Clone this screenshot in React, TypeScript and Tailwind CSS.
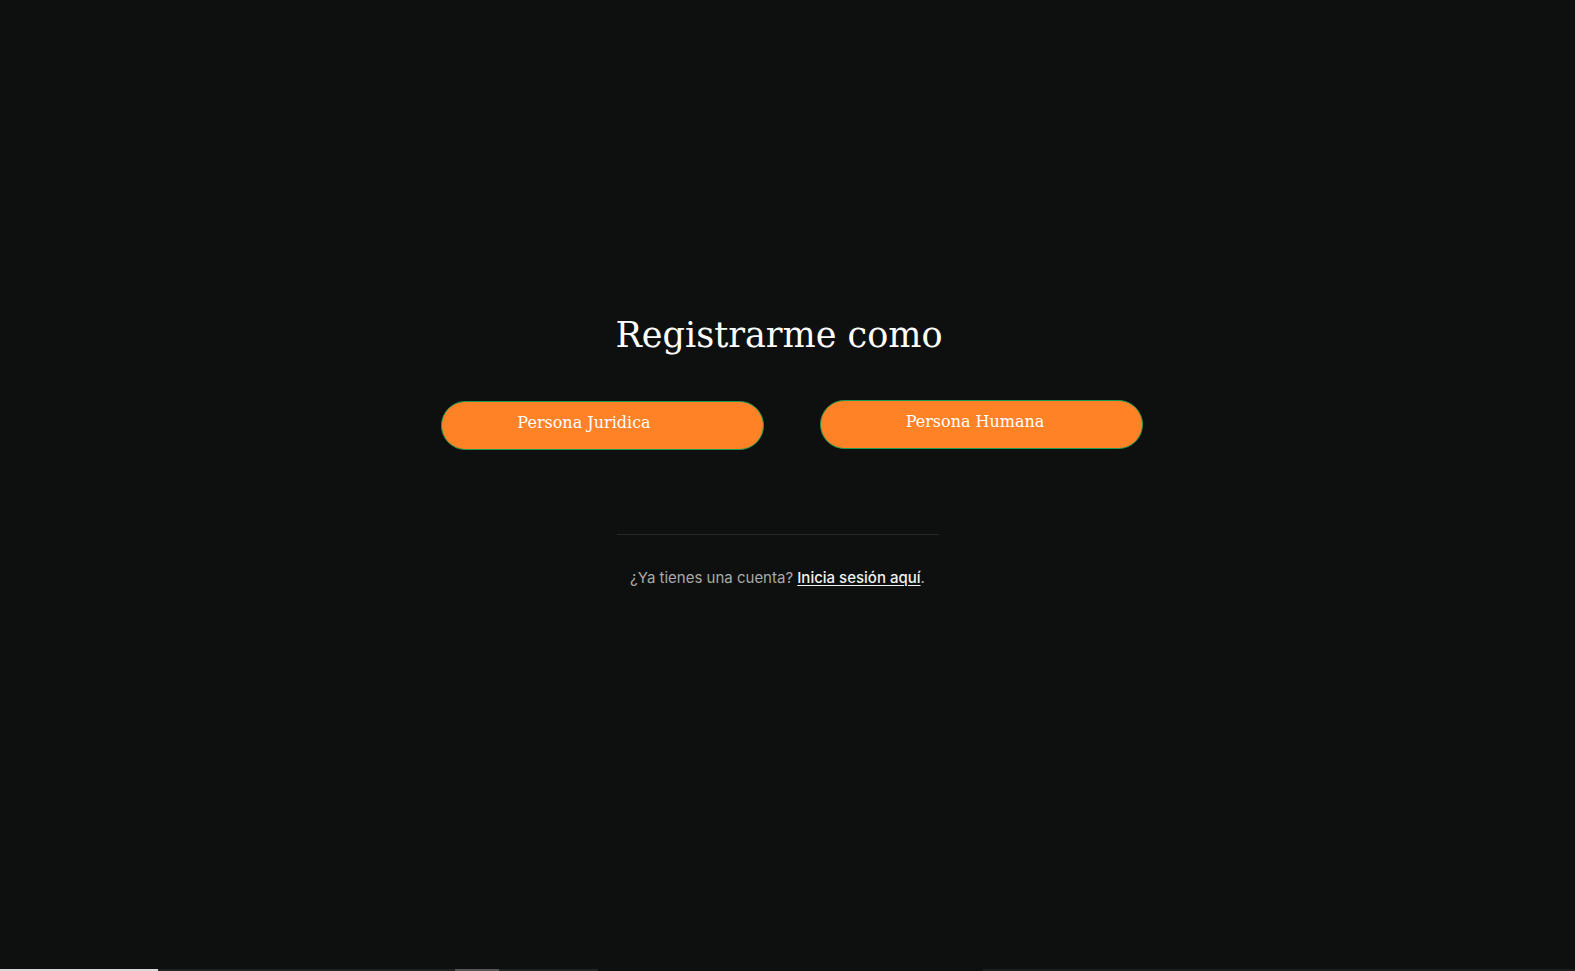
export default function App() {
  return (
    <div className="flex h-[971px] w-full flex-col overflow-hidden bg-[#0e100f]">
      <main className="flex flex-1 flex-col items-center pt-[313px]">
        <h1 className="pr-[17px] font-['DejaVu_Serif',serif] text-[35px] leading-[44px] text-white">
          Registrarme como
        </h1>

        <div className="mt-[43px] flex gap-[56px] pl-[8px]">
          <button className="mt-[1px] h-[49px] w-[323px] rounded-full border border-[#1f9a55] bg-[#ff8227] pr-[36px] pb-[5px] font-['DejaVu_Serif',serif] text-[16px] text-white">
            Persona Juridica
          </button>
          <button className="h-[49px] w-[323px] rounded-full border border-[#1f9a55] bg-[#ff8227] pr-[12px] pb-[5px] font-['DejaVu_Serif',serif] text-[16px] text-white">
            Persona Humana
          </button>
        </div>

        <div className="mt-[84px] mr-[20px] h-px w-[322px] bg-[#262827]" />

        <p className="mt-[32px] mr-[20px] font-['Inter',sans-serif] text-[15px] text-[#a9aaa9]">
          ¿Ya tienes una cuenta?{' '}
          <a href="#" className="font-medium text-[#f2f2f2] underline underline-offset-2">
            Inicia sesión aquí
          </a>
          .
        </p>
      </main>

      <div className="flex h-[2px] w-full">
        <div className="w-[158px] bg-[#d9d9d9]" />
        <div className="w-[297px] bg-[#222423]" />
        <div className="w-[44px] bg-[#555655]" />
        <div className="w-[99px] bg-[#222423]" />
        <div className="w-[384px]" />
        <div className="flex-1 bg-[#1c1e1d]" />
      </div>
    </div>
  );
}
